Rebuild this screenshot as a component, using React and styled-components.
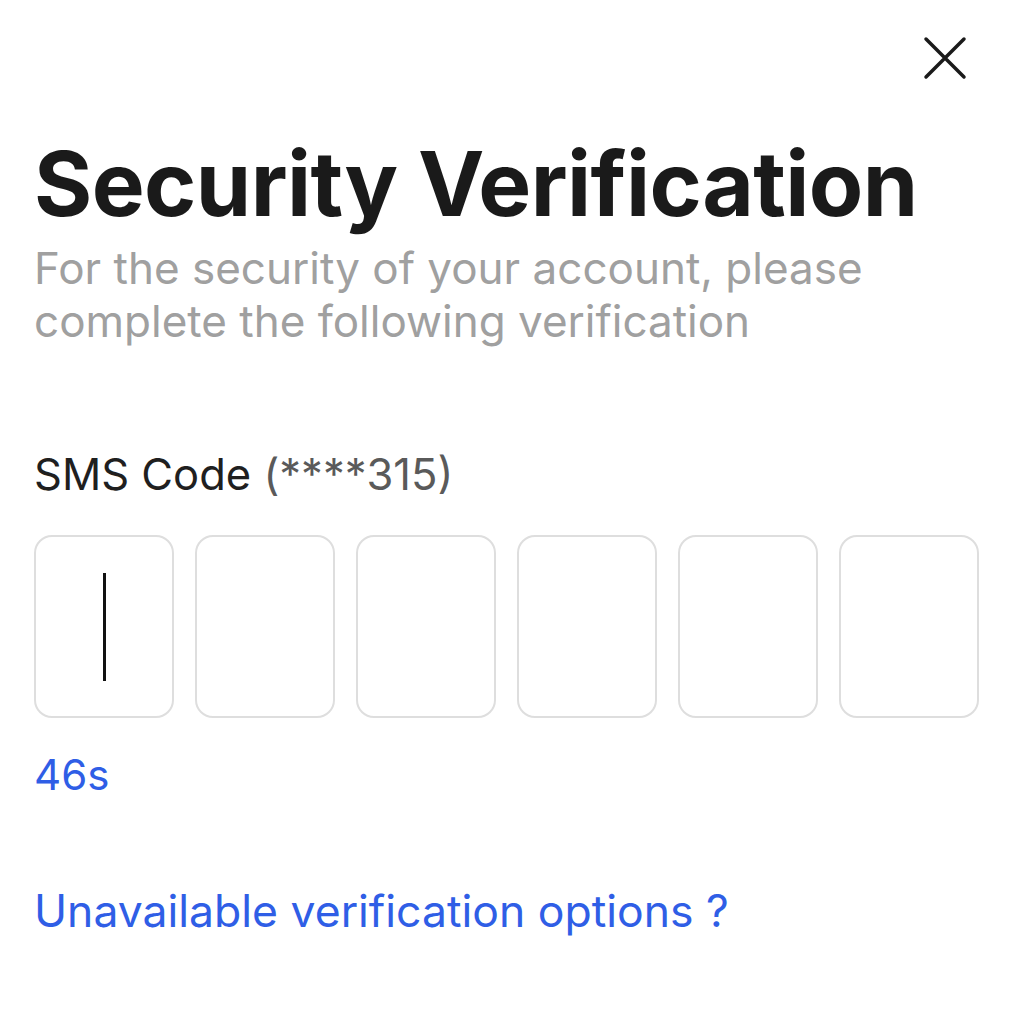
import React from "react";
import styled, { createGlobalStyle } from "styled-components";

const Global = createGlobalStyle`
  html, body { margin: 0; padding: 0; background: #fff; }
  body { font-family: "Inter", "Noto Sans", sans-serif; }
`;

const Page = styled.div`
  width: 1024px;
  min-height: 1016px;
  box-sizing: border-box;
  padding: 34px 46px 0 34px;
  display: flex;
  flex-direction: column;
`;

const TopBar = styled.div`
  display: flex;
  justify-content: flex-end;
  height: 50px;
  padding-right: 9px;
`;

const CloseButton = styled.button`
  border: 0;
  background: none;
  padding: 0;
  width: 48px;
  height: 48px;
  display: flex;
  align-items: center;
  justify-content: center;
  cursor: pointer;
`;

const Title = styled.h1`
  margin: 50px 0 0 0;
  font-family: "Inter", sans-serif;
  font-weight: 700;
  font-size: 89px;
  line-height: 100px;
  letter-spacing: -0.6px;
  color: #1a1a1a;
`;

const Subtitle = styled.p`
  margin: 8px 0 0 0;
  font-family: "Inter", sans-serif;
  font-size: 44px;
  line-height: 53px;
  color: #a0a0a0;
`;

const Label = styled.div`
  margin-top: 101px;
  font-family: "Inter", sans-serif;
  font-size: 43.5px;
  line-height: 50px;
  color: #1f1f1f;
`;

const Masked = styled.span`
  color: #5a5a5a;
`;

const CodeRow = styled.div`
  margin-top: 36px;
  display: grid;
  grid-template-columns: repeat(6, 140px);
  column-gap: 21px;
`;

const CodeBox = styled.div`
  height: 183px;
  box-sizing: border-box;
  border: 2px solid #dedede;
  border-radius: 18px;
  display: flex;
  align-items: center;
  justify-content: center;
`;

const Caret = styled.div`
  width: 3px;
  height: 108px;
  background: #111;
`;

const Timer = styled.div`
  margin-top: 32px;
  font-family: "Inter", sans-serif;
  font-size: 42px;
  line-height: 50px;
  color: #2f5ee6;
`;

const HelpLink = styled.a`
  margin-top: 83px;
  font-family: "Inter", sans-serif;
  font-size: 44.5px;
  line-height: 56px;
  color: #2f5ee6;
  text-decoration: none;
`;

export default function App() {
  return (
    <>
      <Global />
      <Page>
        <TopBar>
          <CloseButton aria-label="Close">
            <svg width="44" height="44" viewBox="0 0 44 44">
              <path d="M3 3 L41 41 M41 3 L3 41" stroke="#1a1a1a" strokeWidth="3.5" strokeLinecap="round" />
            </svg>
          </CloseButton>
        </TopBar>
        <Title>Security Verification</Title>
        <Subtitle>
          For the security of your account, please
          <br />
          complete the following verification
        </Subtitle>
        <Label>
          SMS Code <Masked>(****315)</Masked>
        </Label>
        <CodeRow>
          {[0, 1, 2, 3, 4, 5].map((i) => (
            <CodeBox key={i}>{i === 0 && <Caret />}</CodeBox>
          ))}
        </CodeRow>
        <Timer>46s</Timer>
        <HelpLink href="#">Unavailable verification options ?</HelpLink>
      </Page>
    </>
  );
}
